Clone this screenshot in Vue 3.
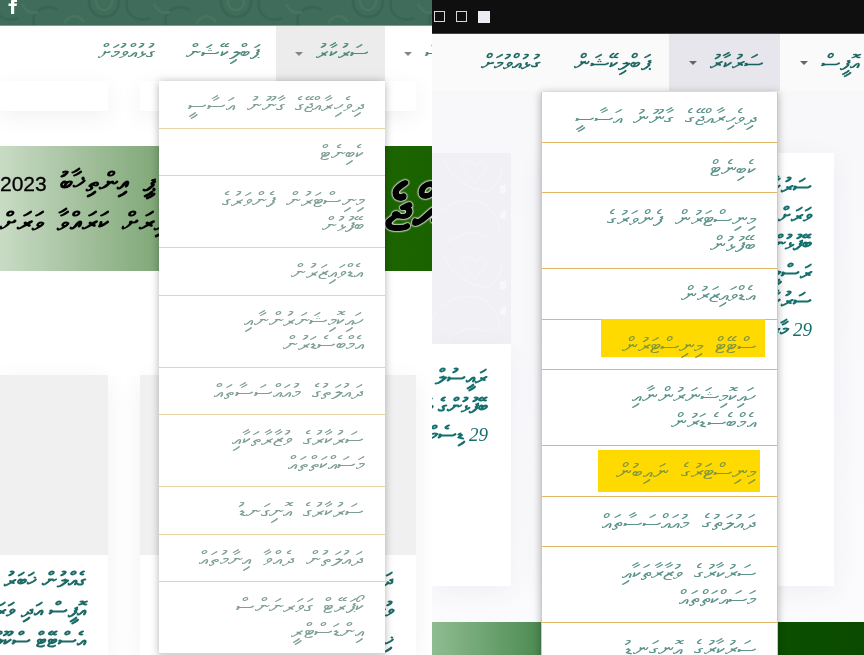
<script setup>
const leftMenu = [
  'ދިވެހިރާއްޖޭގެ ގާނޫނު އަސާސީ',
  'ކެބިނެޓް',
  'މިނިސްޓަރުން ފެންވަރުގެ ބޭފުޅުން',
  'އެޑްވައިޒަރުން',
  'ހައިކޮމިޝަނަރުންނާއި އެމްބެސެޑަރުން',
  'ދައުލަތުގެ މުއައްސަސާތައް',
  'ސަރުކާރުގެ ވުޒާރާތަކާއި މަސައްކަތްތައް',
  'ސަރުކާރުގެ އޮނިގަނޑު',
  'ދައުލަތުން ދެއްވާ އިނާމުތައް',
  'ކޯޕަރޭޓް ގަވަރނަންސް އިންޑަސްޓްރީ',
]
const rightMenu = [
  { t: leftMenu[0] },
  { t: leftMenu[1] },
  { t: leftMenu[2] },
  { t: leftMenu[3] },
  { t: 'ސްޓޭޓް މިނިސްޓަރުން', mark: 'one' },
  { t: leftMenu[4] },
  { t: 'މިނިސްޓަރުގެ ނައިބުން', mark: 'two' },
  { t: leftMenu[5] },
  { t: leftMenu[6] },
  { t: leftMenu[7] },
]
const navItems = [
  { t: 'އޮފީސް', caret: true },
  { t: 'ސަރުކާރު', caret: true, active: true },
  { t: 'ޕަބްލިކޭޝަން' },
  { t: 'ގުޅުއްވުމަށް' },
]
</script>

<template>
  <div class="page">
    <section class="panel left">
      <div class="topbar">
        <svg class="swirls" width="432" height="25" viewBox="0 0 432 25" aria-hidden="true">
          <defs>
            <pattern id="swirl" width="132" height="25" patternUnits="userSpaceOnUse" x="-8">
              <g fill="none" stroke="#396554" stroke-width="3">
                <circle cx="112" cy="2" r="15" />
                <path d="M42 26c-4-14 10-24 24-16" />
                <path d="M4 -2c-6 14 8 26 22 20" />
              </g>
              <g fill="none" stroke="#47735f" stroke-width="2.500">
                <circle cx="112" cy="2" r="8" />
                <path d="M72 24c6-10 14-10 20-2" />
                <path d="M30 4c4 8 10 10 16 8" />
              </g>
            </pattern>
          </defs>
          <rect width="432" height="25" fill="url(#swirl)" />
        </svg>
        <svg class="fb" width="11" height="14" viewBox="0 0 11 14" aria-hidden="true">
          <path d="M3 14V6H0.500V3.500H3V1.500C3 0.500 3.500 -1 6 -1H9V2H7.200C6.400 2 6.200 2.300 6.200 3V3.500H9L8.600 6H6.200V14Z" fill="#fff" />
        </svg>
      </div>
      <nav class="nav">
        <span v-for="n in navItems" :key="n.t" class="nav-item" :class="{ active: n.active }">
          <span>{{ n.t }}</span><b v-if="n.caret" class="caret"></b>
        </span>
      </nav>
      <div class="cards short"><div class="card"></div><div class="card"></div></div>
      <div class="banner">
        <div class="banner-text">ޕީ އިންތިޚާބު <span class="year">2023</span><br>ކުރިން މުޅިރަށް ކަރައްވާ ވަރަށް</div>
        <div class="banner-big">ރާއްޖެ</div>
      </div>
      <div class="cards tall">
        <div class="card"><div class="grey"></div><p>ގެއްލުން ޚަބަރު ދިނުން<br>އޮފީސް އަދި ވަރަށް ބޮޑު<br>އެސްޓޭޓް ސްކޫލްތަކުގެ</p></div>
        <div class="card"><div class="grey"></div><p>ދައުލަތް<br>ވުޒާރާ<br>ޚިދުމަތް</p></div>
      </div>
      <ul class="menu">
        <li v-for="t in leftMenu" :key="t">{{ t }}</li>
      </ul>
    </section>

    <section class="panel right">
      <div class="blackbar"><i class="sq"></i><i class="sq"></i><i class="sq solid"></i></div>
      <nav class="nav">
        <span v-for="n in navItems" :key="n.t" class="nav-item" :class="{ active: n.active }">
          <span>{{ n.t }}</span><b v-if="n.caret" class="caret"></b>
        </span>
      </nav>
      <div class="body">
        <div class="col-a">
          <div class="pale">
            <svg width="79" height="191" viewBox="0 0 79 191" aria-hidden="true">
              <defs>
                <pattern id="vines" width="79" height="96" patternUnits="userSpaceOnUse">
                  <g fill="none" stroke="#f6f6f9" stroke-width="1">
                    <path d="M32 18c-8-10 10-14 11-4 2-9 16-6 10 4l-10 12z" />
                    <path d="M10 4c8 20 24 30 40 34 10 2 18-8 20-22" />
                    <path d="M0 70c10-18 26-24 44-22 10 2 22 12 24 32" />
                    <path d="M14 92c10-12 30-16 42-8" />
                  </g>
                  <path d="M68 32h6v8h-6zM68 60l6-4v10h-6z" fill="#f7f7fa" />
                </pattern>
              </defs>
              <rect width="79" height="191" fill="url(#vines)" />
            </svg>
          </div>
          <div class="white"><p>ރައީސުލް ޖުމްހޫރިއްޔާ<br>ބޭފުޅުންގެ ވަރަށް<br><em>29</em> ޑިސެމްބަރު</p></div>
        </div>
        <div class="col-b">
          <p>ސަރުކާރުގެ ޚިދުމަތް<br>ވަރަށް ބޮޑު ކަންކަން<br>ބޭފުޅުންނަށް ދިނުން<br>ރަސްމީ ކަންތައްތައް<br>ސަރުކާރުގެ ޚިދުމަތް<br><em>29</em> މާރިޗު</p>
        </div>
      </div>
      <div class="banner2"></div>
      <ul class="menu">
        <li v-for="m in rightMenu" :key="m.t">
          <span :class="m.mark">{{ m.t }}</span>
        </li>
      </ul>
    </section>
  </div>
</template>

<style>
html, body { margin: 0; background: #fff; }
</style>

<style scoped>
.page {
  display: grid;
  grid-template-columns: 432px 432px;
  width: 864px;
  height: 655px;
  overflow: hidden;
  font-family: "Noto Sans", "DejaVu Sans", sans-serif;
}
.panel { position: relative; height: 655px; overflow: hidden; filter: blur(0.45px); }
.left { background: #fff; }
.right { background: linear-gradient(#f7f7fa, #fbfbfd); }

.topbar {
  position: relative;
  height: 25px;
  background: #3f6c5b;
  border-bottom: 1px solid #7b9c8f;
  overflow: hidden;
}
.swirls { position: absolute; left: 0; top: 0; }
.fb { position: absolute; left: 8px; top: 0; }

.blackbar {
  height: 34px;
  background: #0f0f10;
  display: flex;
  align-items: center;
  gap: 11px;
  padding-left: 2px;
  border-bottom: 1px solid #444;
  box-sizing: border-box;
}
.sq { width: 9px; height: 9px; border: 1px solid #d8d8d8; }
.sq.solid { background: #ecedf2; width: 12px; height: 12px; border: 0; }

.nav {
  display: flex;
  direction: rtl;
  align-items: stretch;
  height: 55px;
  background: #fff;
  margin-right: -46px;
  font-size: 21px;
  color: #4f8a7c;
  -webkit-text-stroke: 0.15px currentColor;
}
.nav-item { flex: none; display: flex; align-items: center; gap: 13px; padding: 0 16px 5px; white-space: nowrap; }
.nav-item.active { background: #ececec; }
.caret { width: 0; height: 0; border: 4px solid transparent; border-top: 4px solid #858585; border-bottom: 0; margin-inline-end: 3px; margin-top: 5px; }

.cards { display: grid; grid-template-columns: 108px 276px; gap: 32px; }
.card { background: #fff; box-shadow: 0 6px 24px rgba(0,0,0,.06); overflow: hidden; }
.short { height: 30px; }
.banner {
  margin-top: 35px;
  height: 125px;
  overflow: hidden;
  background: linear-gradient(90deg, #c9dbc5 0, #7fa777 160px, #1c6500 385px, #1a6200 432px);
  display: flex;
  align-items: center;
  color: #000;
  white-space: nowrap;
}
.banner-text { flex: none; direction: rtl; word-spacing: 6px; font: bold 27px/38px "Liberation Sans", sans-serif; width: 385px; padding-bottom: 14px; text-align: left; }
.year { font-size: 21px; font-weight: 400; -webkit-text-stroke: 0.3px #000; }
.banner-big { flex: none; font: 900 62px/1 "Liberation Sans", sans-serif; color: #000; text-shadow: 0 0 2px #fff, 0 0 2px #fff, 0 0 2px #fff; direction: rtl; }
.tall { margin-top: 104px; }
.tall .card { height: 281px; }
.grey { height: 180px; background: #f0f0f0; }
.tall p { margin: 0; padding: 9px 22px 0 0; white-space: nowrap; direction: rtl; font: bold 21px/30px "Noto Sans", sans-serif; color: #1c6a66; }

.menu {
  position: absolute;
  list-style: none;
  margin: 0;
  padding: 0;
  direction: rtl;
  background: #fff;
  word-spacing: 6px;
  box-shadow: 0 1px 8px rgba(0,0,0,.3);
  box-sizing: border-box;
}
.left .menu { left: 159px; top: 81px; width: 226px; color: #7f9f96; font-size: 21px; }
.left .menu li { padding: 11px 21px 11px 20px; line-height: 24.5px; border-bottom: 1px solid #e8d3a6; }
.right .menu { left: 109px; top: 92px; width: 237px; color: #5c948d; font-size: 22px; border-left: 1px solid #c9c7d8; border-right: 1px solid #c9c7d8; }
.right .menu li { padding: 12px 21px 12px 20px; line-height: 25.5px; border-bottom: 1px solid #e0b868; }
.right .menu li span.one, .right .menu li span.two { display: inline-block; background: #ffda00; color: #84973a; line-height: 25px; }
.right .menu li span.one { padding: 13px 9px 0 21px; margin: -13px -9px -1px 0; }
.right .menu li span.two { padding: 8px 4px 9px 18px; margin: -8px -4px -13px 0; }

.right .nav { height: 57px; background: #fafafb; color: #17635e; margin-right: -12px; font-size: 22px; -webkit-text-stroke: 0.3px currentColor; }
.right .nav-item { padding: 0 17px 4px; }
.right .nav-item.active { background: #e6e6ec; }
.right .caret { border-top-color: #666; }

.body { display: grid; grid-template-columns: 79px 293px; gap: 30px; margin-top: 62px; height: 433px; }
.col-a { display: flex; flex-direction: column; min-width: 0; }
.pale { height: 191px; background: #f1f1f5; line-height: 0; }
.white, .col-b { background: #fff; box-shadow: 0 6px 24px rgba(60,60,100,.06); overflow: hidden; }
.white { flex: 1; }
.body p { margin: 0; direction: rtl; white-space: nowrap; font: bold 21px/28.500px "Noto Sans", sans-serif; color: #14706e; }
.white p { padding: 18px 23px 0 0; }
.col-b p { padding: 18px 22px 0 0; }
.body em { font: italic 19px "Liberation Serif", serif; }
.banner2 { margin-top: 36px; height: 40px; background: linear-gradient(90deg, #8fbc92 0, #4c8b52 109px, #0b4f00 346px, #0a4a00 432px); }
</style>
